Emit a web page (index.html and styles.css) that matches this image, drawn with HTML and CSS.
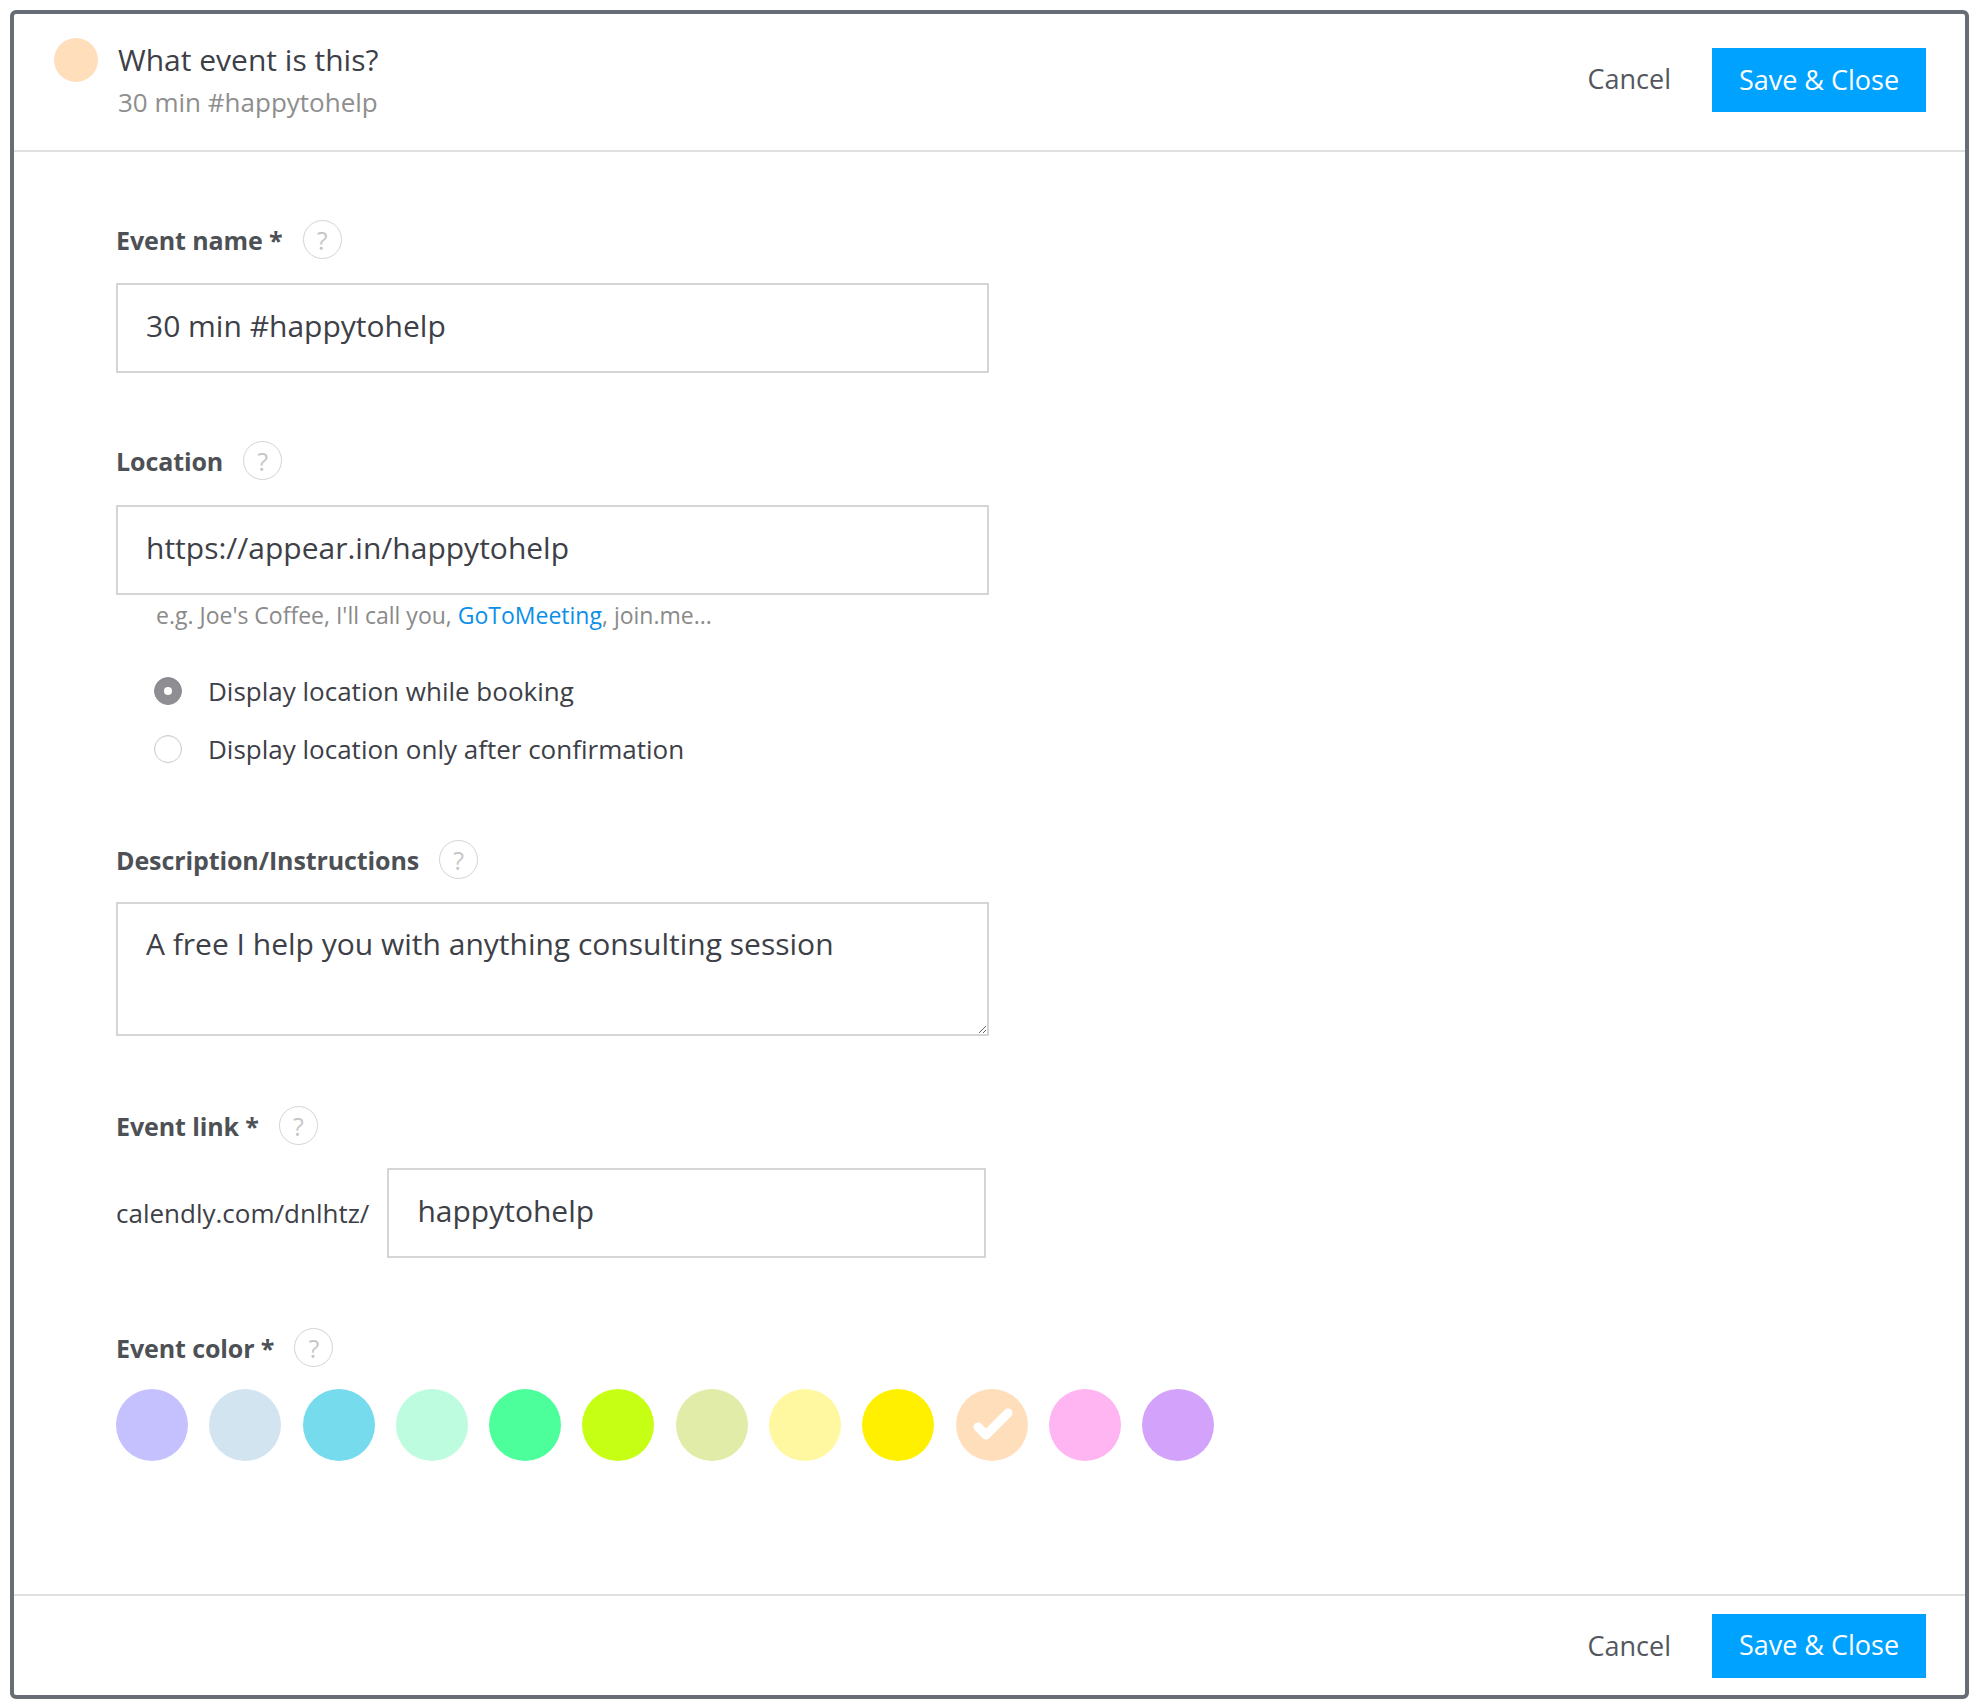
FILE: index.html
```html
<!DOCTYPE html>
<html lang="en">
<head>
<meta charset="utf-8">
<title>Edit event</title>
<link rel="stylesheet" href="styles.css">
</head>
<body>
<div class="modal">
  <header class="modal-header">
    <div class="event-summary">
      <span class="event-dot"></span>
      <div class="event-titles">
        <div class="event-title">What event is this?</div>
        <div class="event-subtitle">30 min #happytohelp</div>
      </div>
    </div>
    <div class="actions">
      <button class="btn-link">Cancel</button>
      <button class="btn-primary">Save &amp; Close</button>
    </div>
  </header>

  <main class="modal-body">
    <section class="field field-first">
      <div class="label-row">
        <label class="field-label">Event name *</label>
        <span class="help">?</span>
      </div>
      <input class="text-input" type="text" value="30 min #happytohelp">
    </section>

    <section class="field">
      <div class="label-row">
        <label class="field-label">Location</label>
        <span class="help">?</span>
      </div>
      <input class="text-input" type="text" value="https://appear.in/happytohelp">
      <div class="hint">e.g. Joe's Coffee, I'll call you, <a class="hint-link">GoToMeeting</a>, join.me...</div>
      <div class="radios">
        <div class="radio-row">
          <span class="radio radio-checked"></span>
          <span class="radio-label">Display location while booking</span>
        </div>
        <div class="radio-row">
          <span class="radio"></span>
          <span class="radio-label">Display location only after confirmation</span>
        </div>
      </div>
    </section>

    <section class="field field-desc">
      <div class="label-row">
        <label class="field-label">Description/Instructions</label>
        <span class="help">?</span>
      </div>
      <textarea class="text-area">A free I help you with anything consulting session</textarea>
    </section>

    <section class="field field-link">
      <div class="label-row">
        <label class="field-label">Event link *</label>
        <span class="help">?</span>
      </div>
      <div class="link-row">
        <span class="link-prefix">calendly.com/dnlhtz/</span>
        <input class="text-input link-input" type="text" value="happytohelp">
      </div>
    </section>

    <section class="field field-color">
      <div class="label-row">
        <label class="field-label">Event color *</label>
        <span class="help">?</span>
      </div>
      <div class="swatches">
        <span class="swatch c1"></span>
        <span class="swatch c2"></span>
        <span class="swatch c3"></span>
        <span class="swatch c4"></span>
        <span class="swatch c5"></span>
        <span class="swatch c6"></span>
        <span class="swatch c7"></span>
        <span class="swatch c8"></span>
        <span class="swatch c9"></span>
        <span class="swatch c10 selected">
          <svg viewBox="0 0 72 72" width="72" height="72"><path d="M22 38 L30 46 L52 24" fill="none" stroke="#fff" stroke-width="9" stroke-linecap="round" stroke-linejoin="round"/></svg>
        </span>
        <span class="swatch c11"></span>
        <span class="swatch c12"></span>
      </div>
    </section>
  </main>

  <footer class="modal-footer">
    <div class="actions">
      <button class="btn-link">Cancel</button>
      <button class="btn-primary">Save &amp; Close</button>
    </div>
  </footer>
</div>
</body>
</html>
```

FILE: styles.css
```css
* { box-sizing: border-box; }

body {
  margin: 0;
  background: #ffffff;
  font-family: "Open Sans", "Liberation Sans", sans-serif;
  color: #3d4047;
}

.modal {
  margin: 10px;
  width: 1959px;
  height: 1689px;
  border: 4px solid #686c74;
  border-radius: 6px;
  display: flex;
  flex-direction: column;
  background: #fff;
}

.modal-header {
  height: 138px;
  padding: 24px 39px 0 40px;
  border-bottom: 2px solid #e0e0e0;
  display: flex;
  justify-content: space-between;
  align-items: flex-start;
}

.event-summary {
  display: flex;
  align-items: flex-start;
  gap: 20px;
}

.event-dot {
  width: 44px;
  height: 44px;
  border-radius: 50%;
  background: #ffdfbb;
  flex: none;
}

.event-titles {
  padding-top: 5px;
}

.event-title {
  font-size: 30px;
  line-height: 34px;
  color: #3d4047;
}

.event-subtitle {
  margin-top: 9px;
  font-size: 26px;
  line-height: 32px;
  color: #8e8e8e;
}

.actions {
  display: flex;
  align-items: center;
  gap: 41px;
}

.modal-header .actions {
  margin-top: 10px;
}

.btn-link {
  border: 0;
  background: none;
  padding: 0;
  font-family: inherit;
  font-size: 27px;
  color: #54575e;
}

.modal-header .btn-link {
  padding-bottom: 4px;
}

.btn-primary {
  border: 0;
  width: 214px;
  height: 64px;
  background: #00a2ff;
  color: #fff;
  font-family: inherit;
  font-size: 27px;
  padding: 0 0 2px;
}

.modal-body {
  flex: 1;
  padding: 68px 0 0 102px;
}

.field { margin-top: 68px; }
.field-first { margin-top: 0; }
.field-desc { margin-top: 71px; }
.field-link { margin-top: 70px; }
.field-color { margin-top: 70px; }

.label-row {
  display: flex;
  align-items: center;
  gap: 20px;
  height: 39px;
}

.field-label {
  font-size: 25px;
  font-weight: 700;
  color: #4d5055;
  letter-spacing: -0.1px;
}

.help {
  width: 39px;
  height: 39px;
  border-radius: 50%;
  border: 1.5px solid #d4d4d4;
  color: #c6c6c6;
  font-size: 25px;
  display: flex;
  align-items: center;
  justify-content: center;
  flex: none;
}

.text-input {
  display: block;
  margin-top: 24px;
  width: 873px;
  height: 90px;
  border: 2px solid #d5d5d5;
  border-radius: 0;
  padding: 0 28px 6px;
  font-family: inherit;
  font-size: 30px;
  color: #3d4047;
  background: #fff;
  outline: none;
}

.field + .field .text-input { margin-top: 25px; }

.hint {
  margin-top: 8px;
  padding-left: 40px;
  font-size: 23px;
  line-height: 24px;
  color: #8a8a8a;
}

.hint-link { color: #0b8fe8; }

.radios {
  margin-top: 44px;
  padding-left: 38px;
  display: flex;
  flex-direction: column;
  gap: 18px;
}

.radio-row {
  display: flex;
  align-items: center;
  gap: 26px;
  height: 40px;
}

.radio {
  width: 28px;
  height: 28px;
  border-radius: 50%;
  border: 1.5px solid #cbcbcb;
  box-shadow: inset 0 1px 1px rgba(0,0,0,0.06);
  flex: none;
  display: flex;
  align-items: center;
  justify-content: center;
}

.radio-checked {
  background: #8e8e93;
  border-color: #8e8e93;
}

.radio-checked::after {
  content: "";
  width: 8px;
  height: 8px;
  border-radius: 50%;
  background: #fff;
}

.radio-label {
  font-size: 26px;
  color: #3d4047;
}

.text-area {
  display: block;
  margin-top: 23px;
  width: 873px;
  height: 134px;
  border: 2px solid #d5d5d5;
  border-radius: 0;
  padding: 20px 28px;
  font-family: inherit;
  font-size: 30px;
  line-height: 40px;
  color: #3d4047;
  resize: vertical;
  outline: none;
}

.link-row {
  margin-top: 23px;
  display: flex;
  align-items: center;
  gap: 18px;
}

.link-prefix {
  font-size: 26px;
  color: #3d4047;
}

.link-row .text-input.link-input {
  margin-top: 0;
  width: 599px;
}

.swatches {
  margin-top: 22px;
  display: flex;
  gap: 21.3px;
}

.swatch {
  width: 72px;
  height: 72px;
  border-radius: 50%;
  flex: none;
  display: block;
}

.swatch svg { display: block; }

.c1 { background: #c5c1ff; }
.c2 { background: #d3e4f1; }
.c3 { background: #76dbed; }
.c4 { background: #befcdf; }
.c5 { background: #4dff9b; }
.c6 { background: #c6ff13; }
.c7 { background: #e0eca8; }
.c8 { background: #fff8a1; }
.c9 { background: #fff000; }
.c10 { background: #ffdfbb; }
.c11 { background: #ffb5f2; }
.c12 { background: #d3a3fc; }

.modal-footer {
  height: 101px;
  border-top: 2px solid #e0e0e0;
  padding: 0 39px 0 0;
  display: flex;
  justify-content: flex-end;
  align-items: center;
}
```
